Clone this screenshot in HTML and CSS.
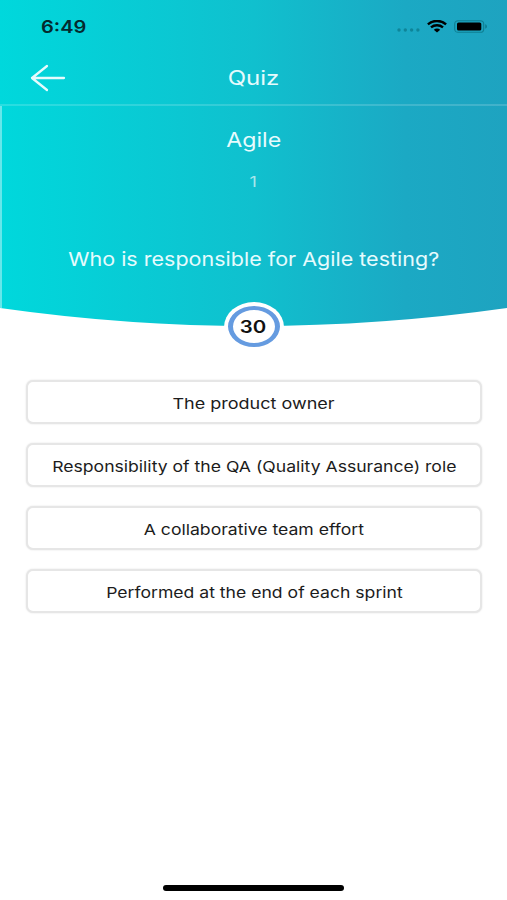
FILE: index.html
```
<!DOCTYPE html>
<html lang="en">

<head>
    <meta charset="UTF-8">
    <meta name="viewport" content="width=device-width, initial-scale=1.0">
    <title>Quiz</title>
    <link rel="stylesheet" href="styles.css">
</head>

<body>

    <div class="screen">
        <!-- Top area with curved bottom edge -->
        <header class="top-area">
            <div class="status-bar">
                <span class="wide time">6:49</span>
                <div class="status-icons">
                    <svg class="signal" width="24" height="4" viewBox="0 0 24 4">
                        <circle cx="2" cy="2" r="1.7" />
                        <circle cx="8.3" cy="2" r="1.7" />
                        <circle cx="14.6" cy="2" r="1.7" />
                        <circle cx="20.9" cy="2" r="1.7" />
                    </svg>
                    <svg class="wifi" width="20" height="13" viewBox="0 0 20 13">
                        <path d="M.9 4.3C6-.2 14-.2 19.1 4.3" />
                        <path d="M4 7.4C7.4 4.5 12.6 4.5 16 7.4" />
                        <path class="wifi-dot" d="M6.8 9.7C8.6 8.2 11.4 8.2 13.2 9.7L10 12.6Z" />
                    </svg>
                    <svg class="battery" width="34" height="13" viewBox="0 0 34 13">
                        <rect class="battery-case" x="0.7" y="0.7" width="29" height="11.6" rx="3.4" />
                        <rect x="3" y="2.4" width="24.3" height="8.2" rx="1.6" />
                        <path class="battery-tip" d="M31.2 4.3C33.6 5 33.6 8 31.2 8.7Z" />
                    </svg>
                </div>
            </div>

            <nav class="nav-bar">
                <svg class="back" width="36" height="28" viewBox="0 0 36 28">
                    <path d="M17 2L2 14L17 26M2 14H34" />
                </svg>
                <h1 class="wide nav-title">Quiz</h1>
            </nav>

            <section class="question-area">
                <h2 class="wide topic">Agile</h2>
                <p class="wide number">1</p>
                <p class="wide question">Who is responsible for Agile testing?</p>
            </section>
        </header>

        <!-- Countdown -->
        <div class="timer">
            <div class="timer-ring"><span class="wide timer-value">30</span></div>
        </div>

        <!-- Answers -->
        <main class="answers">
            <button class="answer"><span class="wide">The product owner</span></button>
            <button class="answer"><span class="wide long">Responsibility of the QA (Quality Assurance) role</span></button>
            <button class="answer"><span class="wide long">A collaborative team effort</span></button>
            <button class="answer"><span class="wide long">Performed at the end of each sprint</span></button>
        </main>

        <div class="home-indicator"></div>
    </div>

</body>

</html>
```

FILE: styles.css
```
* {
    box-sizing: border-box;
}

body {
    margin: 0;
    background-color: #fff;
    font-family: Inter, "Liberation Sans", sans-serif;
}

h1,
h2,
p {
    margin: 0;
    font-weight: 400;
}

.screen {
    display: flex;
    flex-direction: column;
    width: 507px;
    height: 900px;
    overflow: hidden;
}

/* Extended letterforms */
.wide {
    display: inline-block;
    white-space: nowrap;
    transform: scaleX(1.2);
}

/* Top area */
.top-area {
    height: 327px;
    flex: none;
    color: #e6fbfd;
    background: linear-gradient(90deg, #00d8dc 0%, #10c0ce 50%, #1ba9c4 80%, #1ea3c0 100%);
    clip-path: path("M0 0H507V308Q253.5 344 0 308Z");
}

.status-bar {
    display: flex;
    justify-content: space-between;
    height: 52px;
    padding: 0 19px 0 41px;
}

.time {
    height: 52px;
    line-height: 54px;
    font-size: 17px;
    font-weight: 600;
    color: #042a2e;
    transform: scaleX(1.18);
    transform-origin: left;
}

.status-icons {
    display: flex;
    padding-top: 20px;
}

.signal {
    margin: 8px 6px 0 0;
    fill: #0e8599;
}

.wifi {
    margin-right: 7px;
    fill: none;
    stroke: #000;
    stroke-width: 2.4;
}

.wifi-dot {
    fill: #000;
    stroke: none;
}

.battery-case {
    fill: none;
    stroke: #0f7f92;
    stroke-width: 1.1;
}

.battery-tip {
    fill: #0f7f92;
}

.nav-bar {
    display: grid;
    grid-template-columns: 1fr auto 1fr;
    align-items: center;
    height: 54px;
    padding-left: 31px;
    padding-right: 30px;
    border-bottom: 2px solid rgba(255, 255, 255, 0.16);
}

.back {
    margin-left: -1px;
    fill: none;
    stroke: #e6fbfd;
    stroke-width: 2.3;
    stroke-linecap: round;
    stroke-linejoin: round;
}

.nav-title {
    font-size: 20px;
    line-height: 52px;
}

.question-area {
    display: flex;
    flex-direction: column;
    align-items: center;
    height: 221px;
    border-left: 2px solid rgba(255, 255, 255, 0.4);
    border-right: 2px solid transparent;
}

.topic {
    margin-top: 21px;
    font-size: 20px;
    line-height: 26px;
    transform: scaleX(1.16);
}

.number {
    margin-top: 19px;
    font-size: 15px;
    line-height: 20px;
    color: #a9e6ec;
}

.question {
    margin-top: 55px;
    font-size: 19px;
    line-height: 26px;
    transform: scaleX(1.133);
}

/* Countdown */
.timer {
    position: relative;
    flex: none;
    align-self: center;
    width: 60px;
    height: 50px;
    margin-top: -25px;
    padding: 4px;
    border-radius: 50%;
    background-color: #fff;
}

.timer-ring {
    display: flex;
    align-items: center;
    justify-content: center;
    height: 41px;
    border: 4px solid #659be0;
    border-left-width: 5px;
    border-right-width: 5px;
    border-radius: 50%;
}

.timer-value {
    font-size: 17px;
    font-weight: 600;
    color: #111;
}

/* Answers */
.answers {
    display: flex;
    flex-direction: column;
    gap: 19px;
    padding: 28px 25px 0 26px;
}

.answer {
    height: 44px;
    padding: 2px 0 0;
    border: 2px solid #e6e6e6;
    border-radius: 7px;
    background-color: #fff;
    box-shadow: 0 0 2px rgba(0, 0, 0, 0.12);
    font-family: inherit;
    font-size: 15px;
    color: #1c1c1c;
}

.answer .long {
    transform: scaleX(1.173);
}

.home-indicator {
    align-self: center;
    width: 181px;
    height: 6px;
    margin-top: auto;
    margin-bottom: 9px;
    border-radius: 3px;
    background-color: #000;
}
```
